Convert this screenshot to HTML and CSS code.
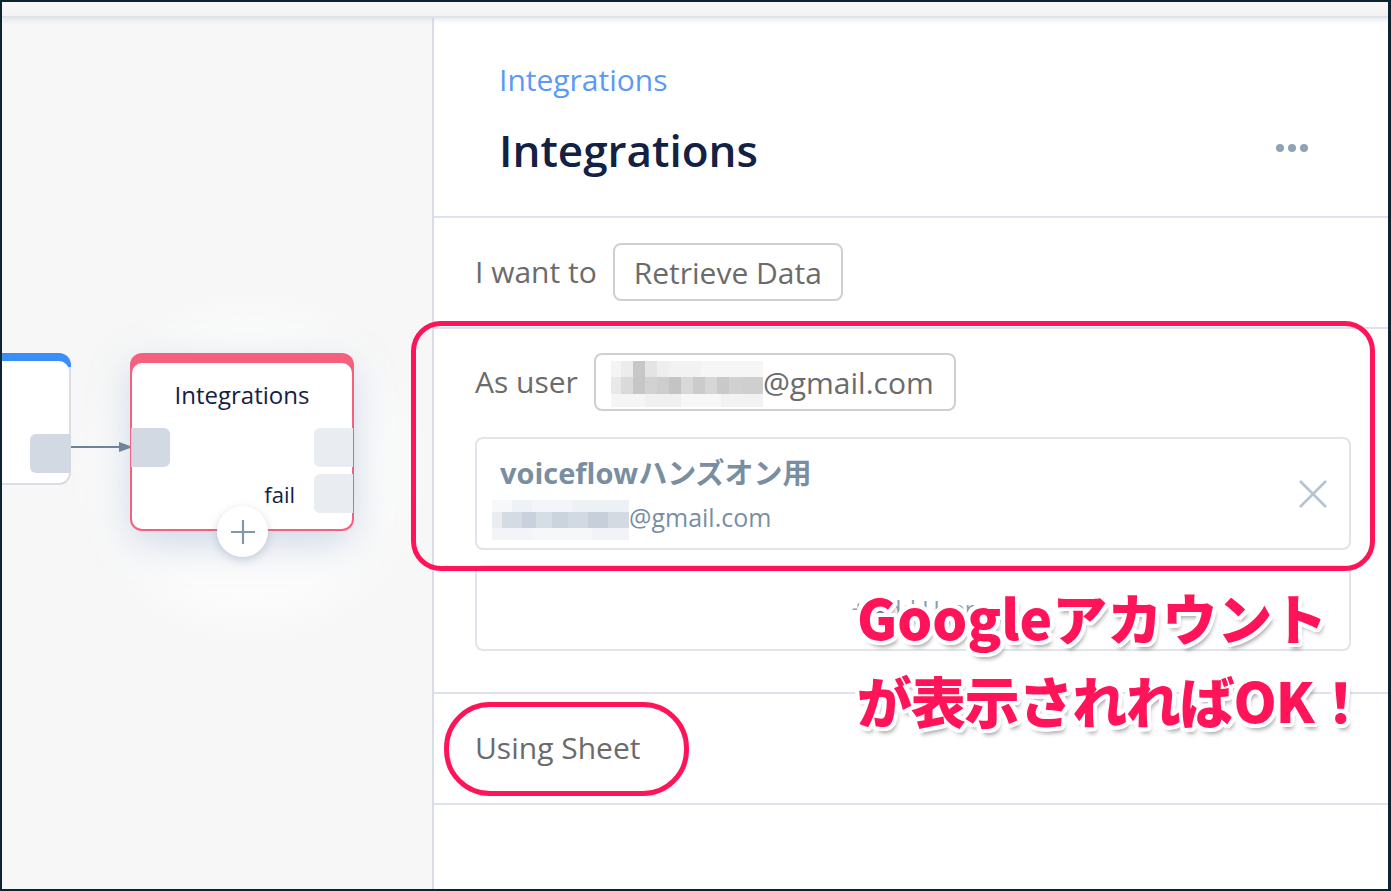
FILE: index.html
```html
<!DOCTYPE html>
<html lang="ja">
<head>
<meta charset="utf-8">
<title>Integrations</title>
<link rel="stylesheet" href="styles.css">
</head>
<body>
<div class="frame">
  <div class="topbar"></div>
  <div class="main">
    <div class="canvas">
      <div class="glow"></div>
      <div class="node node-blue">
        <div class="node-body">
          <div class="port port-out"></div>
        </div>
      </div>
      <svg class="arrow" width="62" height="16" viewBox="0 0 62 16">
        <line x1="0" y1="8" x2="50" y2="8" stroke="#6e8398" stroke-width="2"/>
        <polygon points="48,3 62,8 48,13" fill="#6e8398"/>
      </svg>
      <div class="node node-pink">
        <div class="node-body">
          <div class="node-title">Integrations</div>
          <div class="port port-in"></div>
          <div class="port port-r1"></div>
          <div class="port port-r2"></div>
          <div class="fail">fail</div>
        </div>
        <div class="add-step">
          <svg width="26" height="26" viewBox="0 0 26 26"><path d="M13 1v24M1 13h24" stroke="#8397ab" stroke-width="2.2"/></svg>
        </div>
      </div>
    </div>
    <div class="panel">
      <div class="panel-header">
        <div class="crumb">Integrations</div>
        <div class="title-row">
          <h1 class="title">Integrations</h1>
          <div class="dots"><span></span><span></span><span></span></div>
        </div>
      </div>
      <div class="section section-action">
        <div class="row">
          <span class="label">I want to</span>
          <span class="select">Retrieve Data</span>
        </div>
      </div>
      <div class="section section-user">
        <div class="row">
          <span class="label">As user</span>
          <span class="select select-user"><span class="mosaic mosaic-gray"></span>@gmail.com</span>
        </div>
        <div class="account-card">
          <div class="account-info">
            <div class="account-name">voiceflowハンズオン用</div>
            <div class="account-mail"><span class="mosaic mosaic-blue"></span>@gmail.com</div>
          </div>
          <svg class="close" width="30" height="30" viewBox="0 0 30 30"><path d="M2 2L28 28M28 2L2 28" stroke="#b5c4d2" stroke-width="2.6"/></svg>
        </div>
        <div class="add-user">+ Add User</div>
      </div>
      <div class="section section-sheet">
        <span class="label">Using Sheet</span>
      </div>
    </div>
  </div>

  <div class="highlight highlight-user"></div>
  <div class="highlight highlight-sheet"></div>
  <div class="note">
    <div class="note-line">Googleアカウント</div>
    <div class="note-line note-line-2">が表示されればOK！</div>
  </div>
</div>
</body>
</html>
```
FILE: styles.css
```css
* { box-sizing: border-box; }
html, body { margin: 0; height: 100%; }
body {
  background: #0b2430;
  padding: 2px 3px 2px 2px;
  font-family: "Open Sans", "Noto Sans CJK JP", sans-serif;
}
.frame {
  position: relative;
  width: 1386px;
  height: 887px;
  background: #fff;
  display: flex;
  flex-direction: column;
  overflow: hidden;
}
.topbar {
  flex: none;
  height: 16px;
  background: linear-gradient(#f8f8f8, #f3f3f3);
  border-bottom: 2px solid #dfe3ec;
  box-shadow: 0 2px 5px rgba(205, 212, 226, 0.55);
  position: relative;
  z-index: 2;
}
.main {
  flex: 1;
  display: flex;
  min-height: 0;
}

/* ---------- canvas ---------- */
.canvas {
  flex: none;
  width: 432px;
  background: #f7f7f7;
  border-right: 2px solid #d9dde9;
  position: relative;
  overflow: hidden;
}
.glow {
  position: absolute;
  left: 68px;
  top: 270px;
  width: 360px;
  height: 360px;
  border-radius: 50%;
  background: radial-gradient(circle, rgba(255,255,255,0.85) 0%, rgba(255,255,255,0.6) 50%, rgba(255,255,255,0) 71%);
}
.node {
  position: absolute;
  border-radius: 12px;
}
.node-body {
  position: relative;
  background: #fff;
  height: 100%;
  border-radius: 10px;
}
.node-blue {
  left: -12px;
  top: 335px;
  width: 81px;
  height: 132px;
  background: linear-gradient(#3b8ef7 0 14px, #d9dde4 14px);
  padding: 8px 2px 2px 2px;
}
.node-pink {
  left: 128px;
  top: 335px;
  width: 224px;
  height: 178px;
  background: #f4607e;
  padding: 10px 2px 2px 2px;
  box-shadow: 0 12px 40px rgba(120, 150, 190, 0.35);
}
.port {
  position: absolute;
  width: 39px;
  height: 39px;
  border-radius: 6px;
}
.port-out { right: -2px; top: 73px; width: 41px; background: #d2d9e3; border-radius: 6px 0 0 6px; }
.port-in { left: -1px; top: 65px; background: #d2d9e3; border-radius: 0 6px 6px 0; }
.port-r1 { right: -1px; top: 65px; background: #e9edf2; border-radius: 6px 0 0 6px; }
.port-r2 { right: -1px; top: 111px; background: #e9edf2; border-radius: 6px 0 0 6px; }
.node-title {
  padding-top: 16px;
  text-align: center;
  font-size: 24px;
  line-height: 32px;
  color: #132144;
}
.fail {
  position: absolute;
  right: 57px;
  top: 116px;
  font-size: 22px;
  line-height: 30px;
  color: #132144;
}
.add-step {
  position: absolute;
  left: 87px;
  top: 153px;
  width: 51px;
  height: 51px;
  border-radius: 50%;
  background: #fff;
  box-shadow: 0 3px 10px rgba(110, 135, 165, 0.35);
  display: flex;
  align-items: center;
  justify-content: center;
}
.arrow {
  position: absolute;
  left: 69px;
  top: 421px;
}

/* ---------- panel ---------- */
.panel {
  flex: 1;
  display: flex;
  flex-direction: column;
}
.panel-header {
  padding: 42px 80px 38px 65px;
  border-bottom: 2px solid #dfe2ee;
}
.crumb {
  font-size: 30px;
  line-height: 40px;
  color: #5a9af6;
}
.title-row {
  margin-top: 22px;
  display: flex;
  align-items: center;
  justify-content: space-between;
}
.title {
  margin: 0;
  font-size: 44px;
  line-height: 56px;
  font-weight: 600;
  color: #132144;
}
.dots {
  display: flex;
  gap: 4px;
  margin-top: -4px;
}
.dots span {
  width: 8px;
  height: 8px;
  border-radius: 50%;
  background: #8fa3b6;
}
.section {
  padding-left: 41px;
  padding-right: 37px;
  border-bottom: 2px solid #dfe2ee;
}
.section-action { padding-top: 25px; padding-bottom: 26px; }
.section-user { padding-top: 24px; padding-bottom: 41px; }
.section-sheet { padding-top: 34px; padding-bottom: 35px; }
.row {
  display: flex;
  align-items: center;
  gap: 16px;
}
.label {
  font-size: 30px;
  line-height: 40px;
  color: #6b6b6b;
}
.select {
  display: inline-flex;
  align-items: center;
  height: 58px;
  padding: 0 19px;
  border: 2px solid #cfcfcf;
  border-radius: 8px;
  font-size: 30px;
  color: #6b6b6b;
}
.select-user { padding: 0 20px 0 15px; }
.mosaic {
  display: inline-block;
  flex: none;
}
.mosaic-gray {
  width: 152px;
  height: 46px;
  margin-top: 4px;
  background:
    linear-gradient(to right, #f4f4f4 0 10px, #ececec 10px 22px, #c7c7c7 22px 34px, #e4e4e4 34px 46px, #eeeeee 46px 58px, #f2f2f2 58px 90px, #f6f6f6 90px 152px) 0 0 / 100% 16px no-repeat,
    linear-gradient(to right, #e8e8e8 0 10px, #dadada 10px 22px, #c6c6c6 22px 34px, #d2d2d2 34px 46px, #cdcdcd 46px 58px, #c4c4c4 58px 70px, #d8d8d8 70px 82px, #cbcbcb 82px 94px, #d6d6d6 94px 106px, #c9c9c9 106px 118px, #d1d1d1 118px 130px, #cfcfcf 130px 152px) 0 16px / 100% 17px no-repeat,
    linear-gradient(to right, #f5f5f5 0 34px, #f0f0f0 34px 70px, #f7f7f7 70px 110px, #f2f2f2 110px 152px) 0 33px / 100% 13px no-repeat;
}
.mosaic-blue {
  width: 137px;
  height: 40px;
  margin-left: -8px;
  margin-top: 6px;
  background:
    linear-gradient(to right, #f7f8fa 0 20px, #eef1f5 20px 40px, #f3f5f8 40px 80px, #eef1f4 80px 137px) 0 0 / 100% 12px no-repeat,
    linear-gradient(to right, #e9edf2 0 10px, #d4dbe3 10px 30px, #c9d2dc 30px 44px, #d6dde5 44px 60px, #cbd3dd 60px 76px, #d2d9e2 76px 96px, #c7d0da 96px 116px, #d3dae2 116px 137px) 0 12px / 100% 16px no-repeat,
    linear-gradient(to right, #f2f4f7 0 40px, #f6f7f9 40px 100px, #f1f3f6 100px 137px) 0 28px / 100% 12px no-repeat;
}
.account-card {
  margin-top: 26px;
  height: 113px;
  border: 2px solid #dfe5ea;
  border-radius: 8px;
  display: flex;
  align-items: center;
  justify-content: space-between;
  padding: 0 21px 0 23px;
}
.account-info {
  display: flex;
  flex-direction: column;
}
.account-name {
  font-size: 29px;
  line-height: 36px;
  font-weight: 700;
  color: #7a8ea2;
}
.account-mail {
  margin-top: 10px;
  display: flex;
  align-items: center;
  height: 32px;
  font-size: 25px;
  color: #7a8ea2;
}
.close { flex: none; }
.add-user {
  margin-top: 15px;
  height: 86px;
  border: 2px solid #dfe5ea;
  border-radius: 8px;
  display: flex;
  align-items: center;
  justify-content: center;
  font-size: 24px;
  color: #8a9db0;
}

/* ---------- annotations ---------- */
.highlight {
  position: absolute;
  border: 5px solid #ff1459;
  pointer-events: none;
}
.highlight-user {
  left: 409px;
  top: 319px;
  width: 964px;
  height: 250px;
  border-radius: 30px;
}
.highlight-sheet {
  left: 442px;
  top: 700px;
  width: 245px;
  height: 94px;
  border-radius: 46px;
}
.note {
  position: absolute;
  left: 855px;
  top: 573px;
  font-family: "Noto Sans CJK JP", sans-serif;
  font-weight: 900;
  font-size: 55px;
  line-height: 83px;
  color: #ff1459;
  white-space: nowrap;
  text-shadow:
    4px 0 0 #fff, -4px 0 0 #fff, 0 4px 0 #fff, 0 -4px 0 #fff,
    3px 3px 0 #fff, -3px 3px 0 #fff, 3px -3px 0 #fff, -3px -3px 0 #fff,
    4px 2px 0 #fff, -4px 2px 0 #fff, 4px -2px 0 #fff, -4px -2px 0 #fff,
    2px 4px 0 #fff, -2px 4px 0 #fff, 2px -4px 0 #fff, -2px -4px 0 #fff,
    3px 6px 4px rgba(0, 0, 0, 0.35);
}
.note-line-2 { letter-spacing: -1.2px; }
```
